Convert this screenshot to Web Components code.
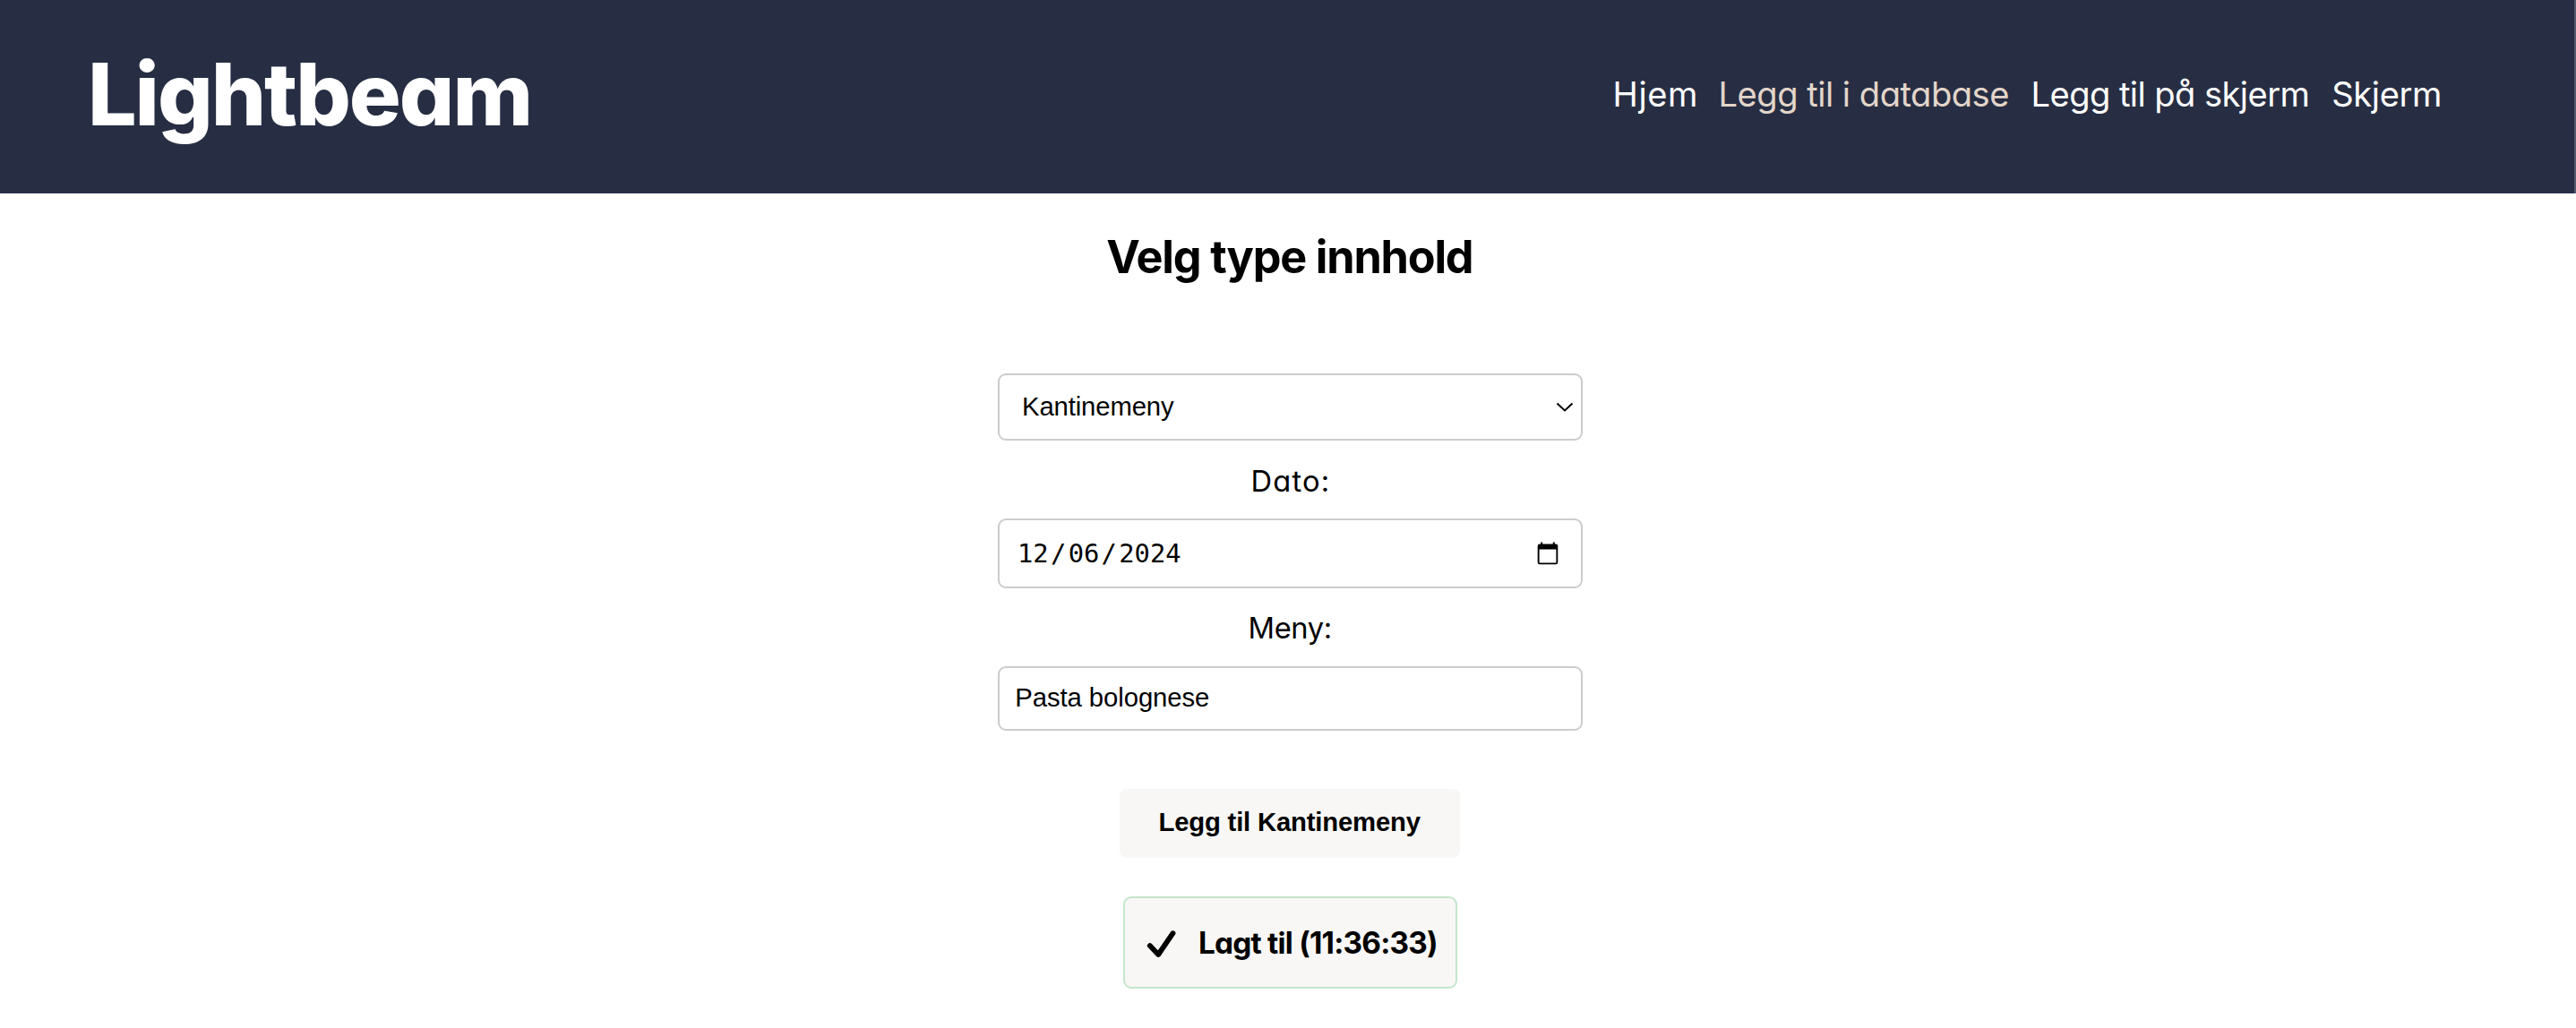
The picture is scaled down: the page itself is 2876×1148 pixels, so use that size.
<!DOCTYPE html>
<html lang="no">
<head>
<meta charset="utf-8">
<title>Lightbeam</title>
<style>
html,body{margin:0;background:#fff;color:#000;font-family:Inter,"Liberation Sans",sans-serif}
</style>
</head>
<body>
<lb-app></lb-app>
<script>
// One line of text whose box is its ink width by its cap height.
class FitText extends HTMLElement {
  connectedCallback() {
    const root = this.attachShadow({ mode: 'open' });
    const cap = +this.getAttribute('cap');
    const width = +this.getAttribute('w');
    const weight = this.getAttribute('weight') || '400';
    const family = this.getAttribute('family') || 'Inter';
    const text = this.textContent;
    const ctx = document.createElement('canvas').getContext('2d');
    const font = s => `${weight} ${s}px "${family}", sans-serif`;
    ctx.font = font(1000);
    const size = cap / ctx.measureText('H').actualBoundingBoxAscent * 1000;
    ctx.letterSpacing = '0.01px';
    const m = ctx.measureText(text);
    const k = size / 1000;
    const base = cap / 2 + (m.fontBoundingBoxAscent - m.fontBoundingBoxDescent) * k / 2;
    root.innerHTML = `<style>
      :host{display:block;flex:none;width:${width}px;height:${cap}px}
      div{width:max-content;font:${font(size)};line-height:${cap}px;white-space:nowrap;letter-spacing:.001px;
        font-feature-settings:"cv11";
        margin-left:${(m.actualBoundingBoxLeft * k).toFixed(2)}px;transform:translateY(${Math.round(cap - base)}px)}
    </style><div><slot></slot></div>`;
    // The rendered advance includes the alternate letter shapes; the side bearings come from the canvas.
    const line = root.querySelector('div');
    const bearings = (m.width - m.actualBoundingBoxLeft - m.actualBoundingBoxRight) * k;
    const ink = line.getBoundingClientRect().width - bearings;
    line.style.letterSpacing = ((width - ink) / (text.length - 1)).toFixed(3) + 'px';
  }
}
class LbHeader extends HTMLElement {
  connectedCallback() {
    this.attachShadow({ mode: 'open' }).innerHTML = `<style>
      :host{display:flex;box-sizing:border-box;height:216px;background:#272e43;color:#fff;
        padding:0 150px 7px 102.5px;align-items:center;justify-content:space-between;border-right:2px solid #535a6b}
      nav{display:flex;gap:28.5px}
      .on{color:#e3d5ca}
    </style>
    <fit-text cap="71" w="487.5" weight="800">Lightbeam</fit-text>
    <nav>
      <fit-text cap="28" w="89.5">Hjem</fit-text>
      <fit-text class="on" cap="28" w="320.5">Legg til i database</fit-text>
      <fit-text cap="28" w="306">Legg til på skjerm</fit-text>
      <fit-text cap="28" w="119">Skjerm</fit-text>
    </nav>`;
  }
}
class LbField extends HTMLElement {
  connectedCallback() {
    this.attachShadow({ mode: 'open' }).innerHTML = `<style>
      :host{display:flex;box-sizing:border-box;width:653px;border:2px solid #ccc;border-radius:9px;
        align-items:center;justify-content:space-between;flex:none;background:#fff}
    </style><slot></slot><slot name="icon"></slot>`;
  }
}
class LbDate extends HTMLElement {
  connectedCallback() {
    this.attachShadow({ mode: 'open' }).innerHTML = `<style>
      :host{display:block;font:28.8px/34px "DejaVu Sans Mono",monospace;white-space:nowrap}
      i{font-style:normal;margin:0 2.3px}
    </style>12<i>/</i>06<i>/</i>2024`;
  }
}
class LbButton extends HTMLElement {
  connectedCallback() {
    this.attachShadow({ mode: 'open' }).innerHTML = `<style>
      :host{display:flex;box-sizing:border-box;width:380px;height:77px;padding:0 0 2px 1.5px;border-radius:8px;
        background:#f8f7f5;align-items:center;justify-content:center}
    </style><slot></slot>`;
  }
}
class LbNotice extends HTMLElement {
  connectedCallback() {
    this.attachShadow({ mode: 'open' }).innerHTML = `<style>
      :host{display:flex;box-sizing:border-box;width:373px;height:103px;border:2px solid #c3e6cb;border-radius:9px;
        background:#f8f7f5;align-items:center;padding:2px 0 0 24px;gap:27px}
      svg{display:block}
    </style>
    <svg width="33" height="32" viewBox="0 0 33 32"><path d="M3.8 18 L13.2 28 L29.5 4.2" fill="none" stroke="#000" stroke-width="5.8" stroke-linecap="round" stroke-linejoin="round"/></svg>
    <slot></slot>`;
  }
}
class LbApp extends HTMLElement {
  connectedCallback() {
    this.attachShadow({ mode: 'open' }).innerHTML = `<style>
      :host{display:block}
      main{display:flex;flex-direction:column;align-items:center;width:653px;margin-left:1114px;padding-top:52px}
      main > fit-text:first-child{margin-right:2px}
      svg{display:block}
      .select{height:75px;margin:112px 0 33px;padding:0 7px 0 27.3px}
      .date{height:78px;margin:30px 0 32px;padding:0 25px 0 20px}
      .text{height:72px;margin:31px 0 65px;padding:0 0 2px 19.5px}
      lb-button{margin-right:1px}
      lb-notice{margin-top:43px}
    </style>
    <lb-header></lb-header>
    <main>
      <fit-text cap="37" w="407" weight="700">Velg type innhold</fit-text>
      <lb-field class="select">
        <fit-text cap="20.6" w="167.3" family="Liberation Sans">Kantinemeny</fit-text>
        <svg slot="icon" width="22" height="14" viewBox="0 0 22 14"><path d="M2.5 2.5 L11 10.5 L19.5 2.5" fill="none" stroke="#000" stroke-width="2"/></svg>
      </lb-field>
      <fit-text cap="24" w="82.7">Dato:</fit-text>
      <lb-field class="date">
        <lb-date></lb-date>
        <svg slot="icon" width="24" height="26" viewBox="0 0 24 26"><path d="M3 2.5H21Q23.3 2.5 23.3 4.8V23Q23.3 25.3 21 25.3H3Q.7 25.3 .7 23V4.8Q.7 2.5 3 2.5ZM2.6 8.5V23.4H21.4V8.5Z" fill-rule="evenodd"/><path d="M4.2 .5h2v3h-2zM17.8 .5h2v3h-2z"/></svg>
      </lb-field>
      <fit-text cap="24" w="88.7">Meny:</fit-text>
      <lb-field class="text"><fit-text cap="20.6" w="213.7" family="Liberation Sans">Pasta bolognese</fit-text></lb-field>
      <lb-button><fit-text cap="20.6" w="291" weight="700" family="Liberation Sans">Legg til Kantinemeny</fit-text></lb-button>
      <lb-notice><fit-text cap="24.5" w="263" weight="700">Lagt til (11:36:33)</fit-text></lb-notice>
    </main>`;
  }
}
customElements.define('fit-text', FitText);
customElements.define('lb-header', LbHeader);
customElements.define('lb-field', LbField);
customElements.define('lb-date', LbDate);
customElements.define('lb-button', LbButton);
customElements.define('lb-notice', LbNotice);
customElements.define('lb-app', LbApp);
</script>
</body>
</html>
